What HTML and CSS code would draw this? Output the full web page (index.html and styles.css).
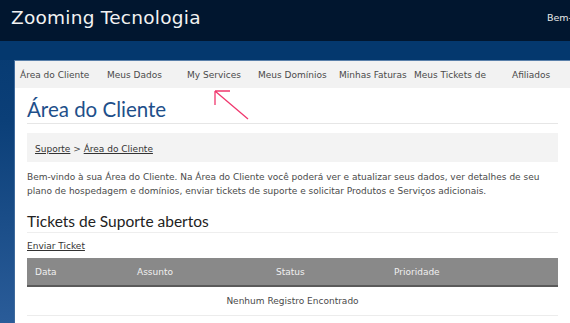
FILE: index.html
```html
<!DOCTYPE html>
<html lang="pt-BR">
<head>
<meta charset="utf-8">
<title>Zooming Tecnologia</title>
<link rel="stylesheet" href="styles.css">
</head>
<body>
<div class="page">
  <header class="topbar">
    <div class="brand">Zooming Tecnologia</div>
    <div class="greeting">Bem-vindo, Cliente</div>
  </header>
  <div class="band"></div>
  <div class="panel">
    <nav class="nav">
      <a class="nav-item n1">Área do Cliente</a>
      <a class="nav-item n2">Meus Dados</a>
      <a class="nav-item n3">My Services</a>
      <a class="nav-item n4">Meus Domínios</a>
      <a class="nav-item n5">Minhas Faturas</a>
      <a class="nav-item n6">Meus Tickets de</a>
      <a class="nav-item n7">Afiliados</a>
    </nav>
    <svg class="arrow" width="40" height="32" viewBox="0 0 40 32">
      <path d="M1 1 L34 29 M1 1 L16 1 M1 1 L1 15" fill="none" stroke="#f0386e" stroke-width="1.3"/>
    </svg>
    <main class="content">
      <h1 class="title">Área do Cliente</h1>
      <div class="crumbs"><a>Suporte</a> &gt; <a>Área do Cliente</a></div>
      <p class="intro">Bem-vindo à sua Área do Cliente. Na Área do Cliente você poderá ver e atualizar seus dados, ver detalhes de seu plano de hospedagem e domínios, enviar tickets de suporte e solicitar Produtos e Serviços adicionais.</p>
      <h2 class="subtitle">Tickets de Suporte abertos</h2>
      <a class="link">Enviar Ticket</a>
      <div class="table">
        <div class="thead">
          <div>Data</div><div>Assunto</div><div>Status</div><div>Prioridade</div>
        </div>
        <div class="empty">Nenhum Registro Encontrado</div>
      </div>
    </main>
  </div>
</div>
</body>
</html>
```
FILE: styles.css
```css
* { box-sizing: border-box; }
html, body { margin: 0; padding: 0; }
body {
  width: 570px;
  height: 323px;
  overflow: hidden;
  font-family: "DejaVu Sans", Verdana, sans-serif;
  font-size: 9px;
  color: #4a4a4a;
  background: linear-gradient(#04386e 0, #0b3f78 120px, #2a5c99 323px);
}
.page { width: 800px; }
.topbar {
  height: 41px;
  background: #01162f;
  display: grid;
  grid-template-columns: 536px auto;
  align-items: start;
  padding-left: 11px;
}
.brand {
  font-size: 18.5px;
  color: #f2f2f2;
  padding-top: 7px;
  letter-spacing: 0.25px;
}
.greeting {
  color: #e8e8e8;
  font-size: 9.5px;
  padding-top: 12px;
}
.band { height: 19px; background: #04386e; }
.panel {
  position: relative;
  margin-left: 14px;
  background: #fff;
  border-left: 1px solid #3f6a9c;
  border-top: 1px solid #5a80aa;
  height: 270px;
}
.nav {
  height: 27px;
  background: #f2f2f2;
  display: flex;
  align-items: center;
  padding-left: 5px;
}
.nav-item { color: #4a4a4a; white-space: nowrap; }
.n1 { width: 87px; }
.n2 { width: 80px; }
.n3 { width: 71px; }
.n4 { width: 81px; }
.n5 { width: 75px; }
.n6 { width: 98px; }
.arrow { position: absolute; left: 199px; top: 29px; }
.content { width: 531px; margin-left: 12px; }
.title {
  margin: 0;
  padding-top: 9px;
  height: 36px;
  font-family: Lato, "Open Sans", sans-serif;
  font-weight: 400;
  font-size: 20.5px;
  color: #1e4f8a;
  border-bottom: 1px solid #e6e6e6;
}
.crumbs {
  margin-top: 9px;
  height: 29px;
  background: #f3f3f3;
  padding: 11px 8px 0;
  color: #4a4a4a;
}
.crumbs a, .link { text-decoration: underline; color: #333; }
.intro {
  margin: 8px 0 0;
  line-height: 14px;
  color: #4a4a4a;
}
.subtitle {
  margin: 14px 0 0;
  height: 21px;
  font-family: Lato, "Open Sans", sans-serif;
  font-weight: 400;
  font-size: 15.5px;
  color: #222;
  border-bottom: 1px solid #eeeeee;
}
.link { display: block; margin-top: 8px; height: 17px; }
.table { margin-top: 0; }
.thead {
  display: grid;
  grid-template-columns: 102px 139px 118px 172px;
  height: 29px;
  align-items: center;
  background: #898989;
  border-bottom: 2px solid #5a5a5a;
  color: #f0f0f0;
}
.thead div { padding-left: 8px; }
.empty {
  height: 29px;
  line-height: 28px;
  text-align: center;
  border-bottom: 1px solid #ececec;
  color: #4a4a4a;
}
```
